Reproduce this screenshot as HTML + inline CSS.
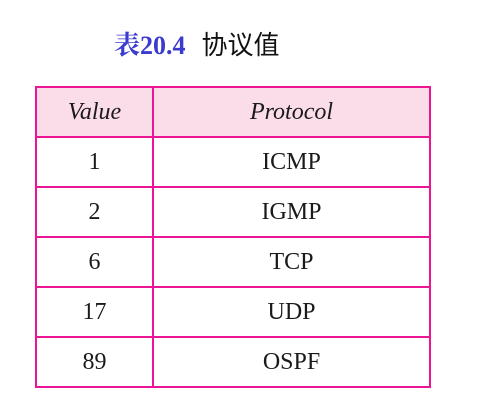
<!DOCTYPE html>
<html><head><meta charset="utf-8"><style>
body{margin:0;width:478px;height:408px;background:#fff;position:relative;overflow:hidden;font-family:"Liberation Serif","Noto Serif CJK SC",serif;}
.t{position:absolute;top:30px;left:114px;font-size:26px;line-height:32px;white-space:nowrap}
.b{color:#3b3bcf;font-weight:bold}
.c{font-family:"Liberation Serif","Noto Sans CJK SC",sans-serif;color:#111;margin-left:16px;font-size:26px}
table{position:absolute;left:35px;top:86px;border-collapse:collapse;}
td{border:2px solid #ec1596;height:48px;padding:0;text-align:center;font-size:24px;color:#1a1a1a;}
tr.h td{background:#fbdce9;font-style:italic;}
</style></head><body>
<div class="t"><span class="b">表20.4</span><span class="c">协议值</span></div>
<table>
<tr class="h"><td style="width:115px">Value</td><td style="width:275px">Protocol</td></tr>
<tr><td>1</td><td>ICMP</td></tr>
<tr><td>2</td><td>IGMP</td></tr>
<tr><td>6</td><td>TCP</td></tr>
<tr><td>17</td><td>UDP</td></tr>
<tr><td>89</td><td>OSPF</td></tr>
</table>
</body></html>
